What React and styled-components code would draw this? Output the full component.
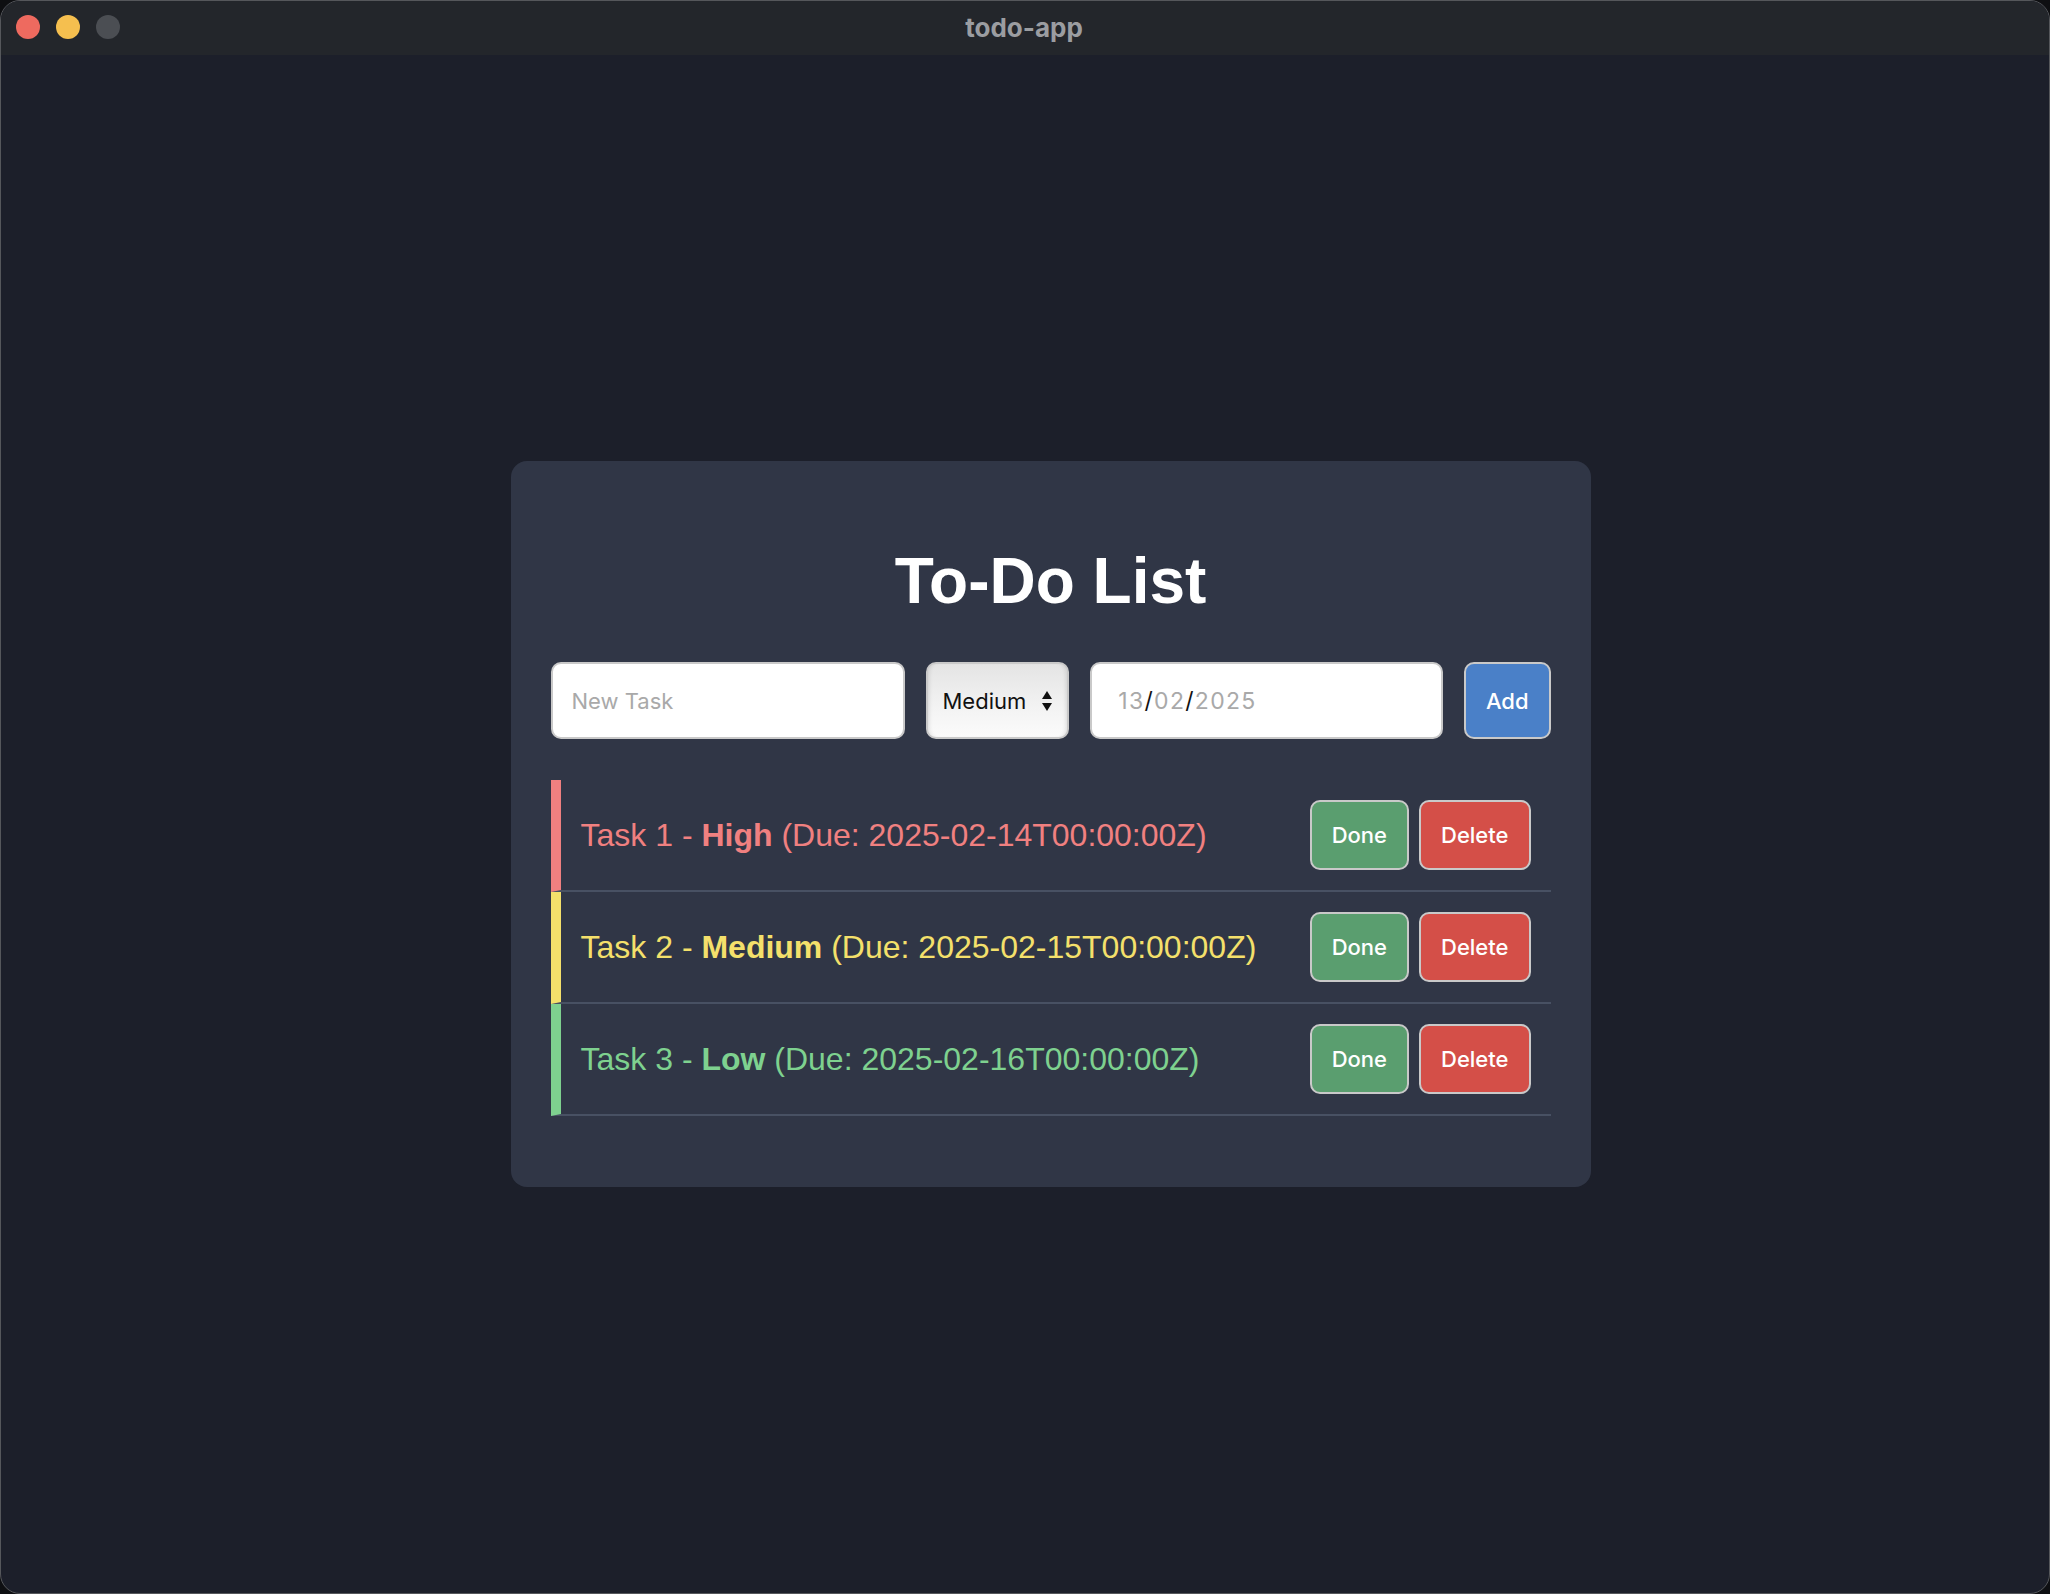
import React from "react";
import styled, { createGlobalStyle } from "styled-components";

const tasks = [
  { id: 1, text: "Task 1", priority: "High", due: "2025-02-14T00:00:00Z" },
  { id: 2, text: "Task 2", priority: "Medium", due: "2025-02-15T00:00:00Z" },
  { id: 3, text: "Task 3", priority: "Low", due: "2025-02-16T00:00:00Z" }
];

const priorityColors = {
  High: "#f08080",
  Medium: "#f4e06b",
  Low: "#7ed18f"
};

const App = () => {
  return (
    <>
      <GlobalStyle />
      <Window>
        <TitleBar>
          <Lights>
            <Light color="#ee6a5f" />
            <Light color="#f5bf4f" />
            <Light color="#4b4e53" />
          </Lights>
          <WindowTitle>todo-app</WindowTitle>
        </TitleBar>
        <Content>
          <Card>
            <Heading>To-Do List</Heading>
            <Form onSubmit={e => e.preventDefault()}>
              <TaskInput placeholder="New Task" />
              <Select>
                <span>Medium</span>
                <svg width="12" height="22" viewBox="0 0 12 22">
                  <path d="M6 1 L11 9 L1 9 Z" fill="#111" />
                  <path d="M6 21 L11 13 L1 13 Z" fill="#111" />
                </svg>
              </Select>
              <DateField>
                <Digits>13</Digits>
                <Slash>/</Slash>
                <Digits>02</Digits>
                <Slash>/</Slash>
                <Digits>2025</Digits>
              </DateField>
              <Button type="submit" bg="#4a80c8">
                Add
              </Button>
            </Form>
            <List>
              {tasks.map(task => (
                <Item key={task.id} color={priorityColors[task.priority]}>
                  <TaskText>
                    {task.text} - <b>{task.priority}</b> (Due: {task.due})
                  </TaskText>
                  <Actions>
                    <Button bg="#5a9e6f">Done</Button>
                    <Button bg="#d44f48">Delete</Button>
                  </Actions>
                </Item>
              ))}
            </List>
          </Card>
        </Content>
      </Window>
    </>
  );
};

export default App;

const GlobalStyle = createGlobalStyle`
  html, body {
    margin: 0;
    padding: 0;
    background: #0e0f12;
  }
  * {
    box-sizing: border-box;
  }
`;

const Window = styled.div`
  width: 2050px;
  height: 1594px;
  display: flex;
  flex-direction: column;
  border: 1px solid #55575b;
  border-radius: 20px;
  overflow: hidden;
  background: #1c1f2a;
`;

const TitleBar = styled.div`
  height: 54px;
  flex-shrink: 0;
  display: flex;
  align-items: center;
  justify-content: center;
  position: relative;
  background: #23262b;
`;

const Lights = styled.div`
  position: absolute;
  left: 15px;
  top: 14px;
  display: flex;
  gap: 16px;
`;

const Light = styled.span`
  width: 24px;
  height: 24px;
  border-radius: 50%;
  background: ${p => p.color};
`;

const WindowTitle = styled.div`
  font-family: Inter, "Liberation Sans", sans-serif;
  font-weight: 700;
  font-size: 26px;
  color: #9b9da1;
  margin-left: -2px;
  margin-top: -2px;
`;

const Content = styled.div`
  flex: 1;
  display: flex;
  align-items: center;
  justify-content: center;
  padding-left: 51px;
`;

const Card = styled.div`
  width: 1080px;
  padding: 40px;
  background: #303646;
  border-radius: 16px;
`;

const Heading = styled.h1`
  margin: 43px 0 44px;
  font-family: "Liberation Sans", Arial, sans-serif;
  font-size: 64px;
  font-weight: 700;
  color: #ffffff;
  text-align: center;
`;

const Form = styled.form`
  display: flex;
  gap: 21px;
  height: 77px;
`;

const fieldBase = `
  height: 100%;
  border: 2px solid #c9c9c9;
  border-radius: 10px;
  font-family: Inter, "Liberation Sans", sans-serif;
  font-size: 22px;
`;

const TaskInput = styled.input`
  ${fieldBase}
  width: 354px;
  padding: 0 19px;
  background: #ffffff;
  color: #111;
  outline: none;

  &::placeholder {
    color: #a9a9a9;
  }
`;

const Select = styled.div`
  ${fieldBase}
  width: 144px;
  display: flex;
  align-items: center;
  justify-content: space-between;
  padding: 0 14px 0 15px;
  color: #111;
  background: linear-gradient(#e4e4e4, #f3f3f3 60%, #fbfbfb);
  box-shadow: inset 4px 0 4px -3px rgba(0, 0, 0, 0.12),
    inset -4px 0 4px -3px rgba(0, 0, 0, 0.12);
`;

const DateField = styled.div`
  ${fieldBase}
  width: 353px;
  display: flex;
  align-items: center;
  padding: 0 26px;
  background: #ffffff;
  font-size: 23px;
  letter-spacing: 1.3px;
`;

const Digits = styled.span`
  color: #a9a9a9;
`;

const Slash = styled.span`
  color: #111;
`;

const Button = styled.button`
  height: 100%;
  padding: 0 20px;
  border: 2px solid #c9c9c9;
  border-radius: 10px;
  background: ${p => p.bg};
  color: #ffffff;
  font-family: Inter, "Liberation Sans", sans-serif;
  font-size: 22px;
  font-weight: 500;
  cursor: pointer;
`;

const List = styled.ul`
  list-style: none;
  margin: 41px 0 31px;
  padding: 0;
`;

const Item = styled.li`
  display: flex;
  align-items: center;
  justify-content: space-between;
  height: 112px;
  padding: 20px;
  border-left: 10px solid ${p => p.color};
  border-bottom: 2px solid #485163;
  color: ${p => p.color};
`;

const TaskText = styled.span`
  font-family: "Liberation Sans", Arial, sans-serif;
  font-size: 32px;
`;

const Actions = styled.div`
  display: flex;
  gap: 10px;
  height: 70px;
`;
